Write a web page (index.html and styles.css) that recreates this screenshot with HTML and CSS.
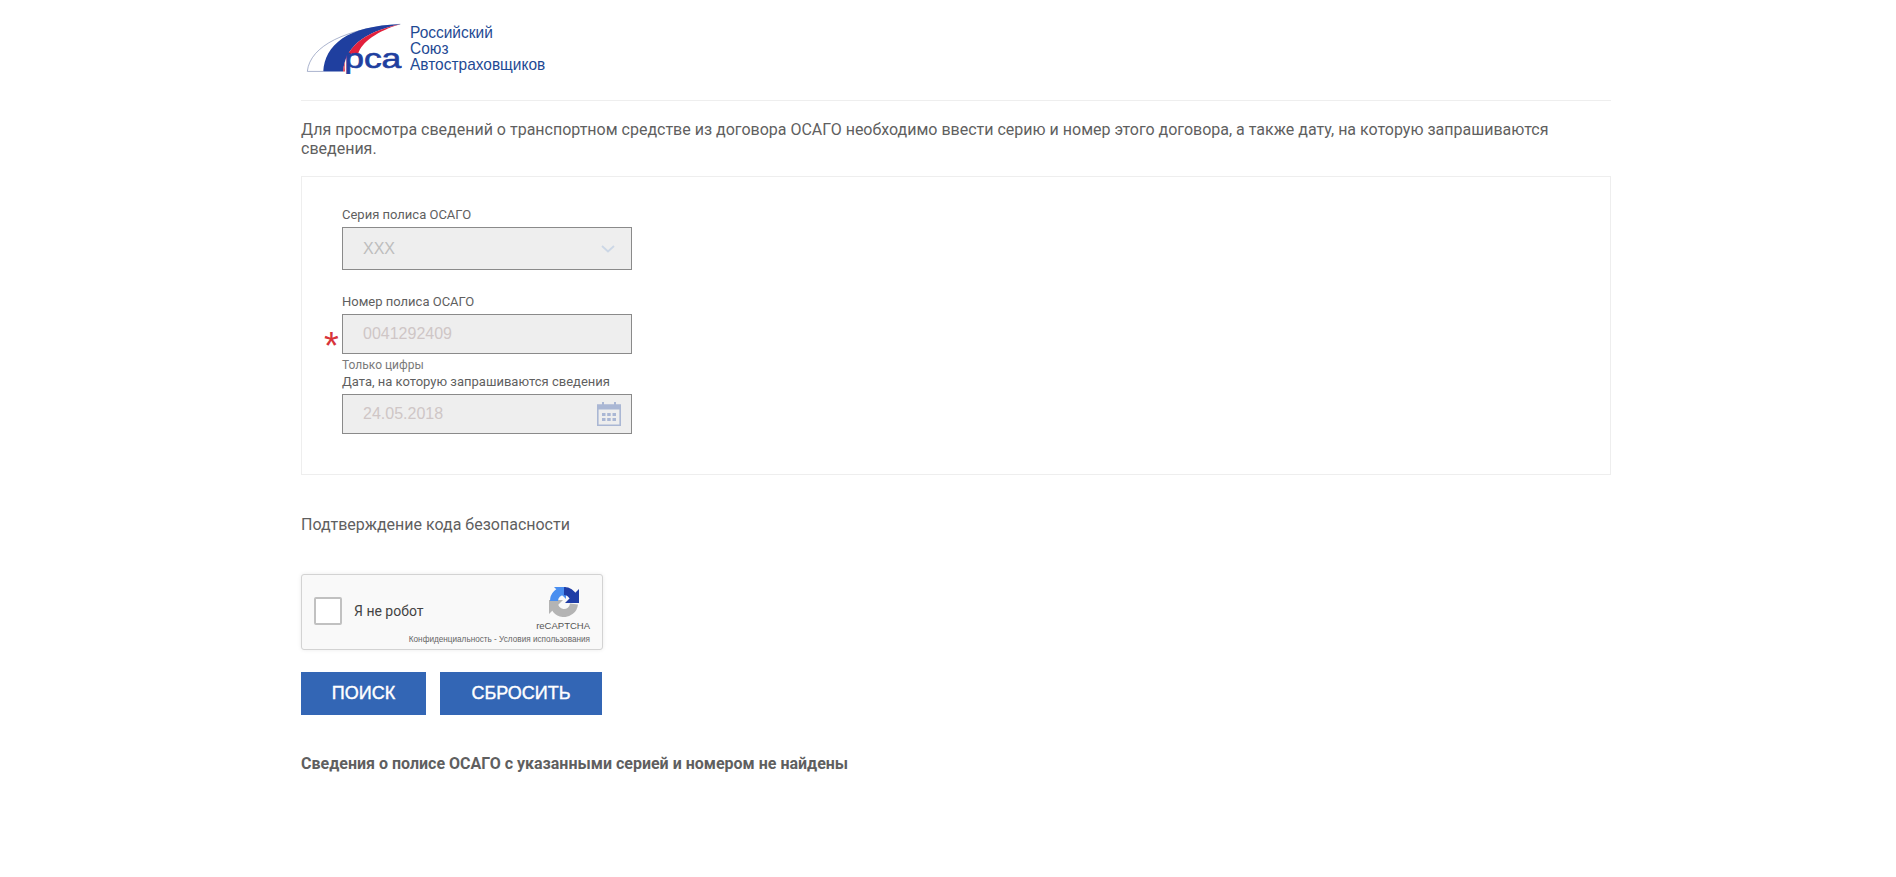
FILE: index.html
```html
<!DOCTYPE html>
<html lang="ru">
<head>
    <meta charset="UTF-8">
    <title>Российский Союз Автостраховщиков</title>
    <link rel="stylesheet" href="styles.css">
</head>
<body>
    <div class="page">
        <!-- Header -->
        <header class="header">
            <svg class="logo-mark" viewBox="45 40 295 155" aria-hidden="true">
                <path d="M100 188H52C60 110 170 58 332 46" fill="none" stroke="#7f8db3" stroke-width="2"/>
                <path d="M100 188C105 110 170 50 332 46C215 70 165 120 160 188Z" fill="#1f3f9f"/>
                <path d="M160 188C165 120 215 70 332 46C265 65 215 100 205 135L172 137C165 150 163 170 165 188Z" fill="#e2203c"/>
                <text class="logo-letters" x="163" y="177" textLength="172" lengthAdjust="spacingAndGlyphs">рса</text>
            </svg>
            <div class="logo-text">
                <span>Российский</span>
                <span>Союз</span>
                <span>Автостраховщиков</span>
            </div>
        </header>

        <p class="intro">Для просмотра сведений о транспортном средстве из договора ОСАГО необходимо ввести серию и номер этого договора, а также дату, на которую запрашиваются сведения.</p>

        <!-- Form -->
        <section class="form-box">
            <label class="field-label">Серия полиса ОСАГО</label>
            <div class="field field-select">
                <span class="field-value">XXX</span>
                <svg class="chevron" viewBox="0 0 14 8" aria-hidden="true"><path d="M1 1l6 5.500L13 1" fill="none" stroke="#ccd7e6" stroke-width="1.8"/></svg>
            </div>

            <label class="field-label label-number">Номер полиса ОСАГО</label>
            <div class="field field-number">
                <span class="required">*</span>
                <span class="field-value value-pink">0041292409</span>
            </div>
            <div class="field-hint">Только цифры</div>

            <label class="field-label">Дата, на которую запрашиваются сведения</label>
            <div class="field field-number">
                <span class="field-value value-pink">24.05.2018</span>
                <svg class="calendar" viewBox="0 0 24 24" aria-hidden="true">
                    <path d="M0.800 3h22.400v20.200H0.800z" fill="none" stroke="#aab7d4" stroke-width="1.600"/>
                    <path d="M1 3h22v4.500H1zM5 0h2v4H5zM17 0h2v4h-2z" fill="#aab7d4"/>
                    <path d="M5 11h3.500v3H5zM10.200 11h3.500v3h-3.500zM15.500 11H19v3h-3.500zM5 16h3.500v3H5zM10.200 16h3.500v3h-3.500zM15.500 16H19v3h-3.500z" fill="#aab7d4"/>
                </svg>
            </div>
        </section>

        <h2 class="captcha-title">Подтверждение кода безопасности</h2>

        <!-- reCAPTCHA -->
        <div class="captcha">
            <span class="captcha-check"></span>
            <span class="captcha-label">Я не робот</span>
            <div class="captcha-brand">
                <svg class="captcha-icon" viewBox="0 0 32 32" aria-hidden="true">
                    <path d="M26 19A10 10 0 0 1 6 17" fill="none" stroke="#b4b4b4" stroke-width="8"/>
                    <path d="M1 15H15L1 29z" fill="#b4b4b4"/>
                    <path d="M6 16A10 10 0 0 1 16 6" fill="none" stroke="#4a8ff0" stroke-width="8"/>
                    <path d="M6 2H18V14z" fill="#4a8ff0"/>
                    <path d="M16 6A10 10 0 0 1 25 12" fill="none" stroke="#1f3da6" stroke-width="8"/>
                    <path d="M31 4V18H17z" fill="#1f3da6"/>
                </svg>
                <div class="captcha-name">reCAPTCHA</div>
                <div class="captcha-links">Конфиденциальность - Условия использования</div>
            </div>
        </div>

        <div class="buttons">
            <button class="btn btn-search" type="button">ПОИСК</button>
            <button class="btn btn-reset" type="button">СБРОСИТЬ</button>
        </div>

        <p class="result">Сведения о полисе ОСАГО с указанными серией и номером не найдены</p>
    </div>
</body>
</html>
```

FILE: styles.css
```css
/* Reset */
* {
    margin: 0;
    padding: 0;
    box-sizing: border-box;
}

body {
    font-family: 'Roboto', sans-serif;
    color: #5f5f5f;
    background: #fff;
}

.page {
    width: 1310px;
    margin-left: 301px;
}

/* Header */
.header {
    display: flex;
    align-items: flex-start;
    height: 101px;
    padding: 22px 0 0 4px;
    border-bottom: 1px solid #eeeeee;
}

.logo-mark {
    width: 98px;
    height: 52px;
}

.logo-letters {
    font-family: 'Liberation Sans', sans-serif;
    font-size: 86px;
    fill: #1f3f9f;
    stroke: #1f3f9f;
    stroke-width: 2px;
}

.logo-text {
    display: flex;
    flex-direction: column;
    margin: 3px 0 0 7px;
    font-family: 'Liberation Sans', sans-serif;
    font-size: 17px;
    line-height: 16px;
    color: #1f4a94;
    transform: scaleX(0.91);
    transform-origin: left;
}

.intro {
    margin-top: 19px;
    font-size: 16px;
    line-height: 19px;
}

/* Form */
.form-box {
    height: 299px;
    margin-top: 18px;
    padding: 30px 40px 0;
    border: 1px solid #eeeeee;
}

.field-label {
    display: block;
    font-size: 13px;
    line-height: 15px;
    margin-bottom: 5px;
}

.label-number {
    margin-top: 24px;
}

.field {
    position: relative;
    display: flex;
    align-items: center;
    justify-content: space-between;
    width: 290px;
    padding: 0 10px 0 20px;
    background: #eeeeee;
    border: 1px solid #8a8a8a;
}

.field-select {
    height: 43px;
}

.field-number {
    height: 40px;
}

.field-value {
    font-family: 'Liberation Sans', sans-serif;
    font-size: 16px;
    color: #bdbdbd;
}

.value-pink {
    color: #cfc6c6;
}

.required {
    position: absolute;
    left: -19px;
    top: 11px;
    font-family: 'Liberation Sans', sans-serif;
    font-size: 38px;
    line-height: 40px;
    color: #d8343a;
}

.chevron {
    width: 14px;
    height: 8px;
    margin-right: 6px;
}

.calendar {
    width: 24px;
    height: 24px;
}

.field-hint {
    margin: 4px 0 2px;
    font-size: 12px;
    line-height: 14px;
    color: #7a7a7a;
}

.captcha-title {
    margin-top: 40px;
    font-size: 16px;
    font-weight: 400;
    line-height: 19px;
}

/* reCAPTCHA */
.captcha {
    position: relative;
    display: flex;
    align-items: center;
    width: 302px;
    height: 76px;
    margin-top: 40px;
    padding: 0 0 3px 12px;
    background: #f9f9f9;
    border: 1px solid #d3d3d3;
    border-radius: 3px;
    box-shadow: 0 0 4px rgba(0, 0, 0, 0.08);
}

.captcha-check {
    width: 28px;
    height: 28px;
    background: #fff;
    border: 2px solid #c1c1c1;
    border-radius: 2px;
}

.captcha-label {
    margin-left: 12px;
    font-size: 14px;
    color: #444;
}

.captcha-brand {
    position: absolute;
    top: 10px;
    right: 12px;
    display: flex;
    flex-direction: column;
    align-items: flex-end;
}

.captcha-icon {
    width: 32px;
    height: 32px;
    margin-right: 10px;
}

.captcha-name {
    margin-top: 3px;
    font-family: 'Liberation Sans', sans-serif;
    font-size: 9.500px;
    line-height: 12px;
    color: #555;
}

.captcha-links {
    margin-top: 3px;
    font-family: 'Liberation Sans', sans-serif;
    font-size: 8.200px;
    line-height: 9px;
    white-space: nowrap;
    color: #666;
}

/* Buttons */
.buttons {
    display: flex;
    gap: 14px;
    margin-top: 22px;
}

.btn {
    height: 43px;
    font-family: 'Liberation Sans', sans-serif;
    font-size: 18px;
    color: #fff;
    background: #3366b5;
    border: none;
    -webkit-text-stroke: 0.4px #fff;
}

.btn-search {
    width: 125px;
}

.btn-reset {
    width: 162px;
}

.result {
    margin-top: 39px;
    font-size: 16px;
    font-weight: 700;
    line-height: 19px;
}
```
